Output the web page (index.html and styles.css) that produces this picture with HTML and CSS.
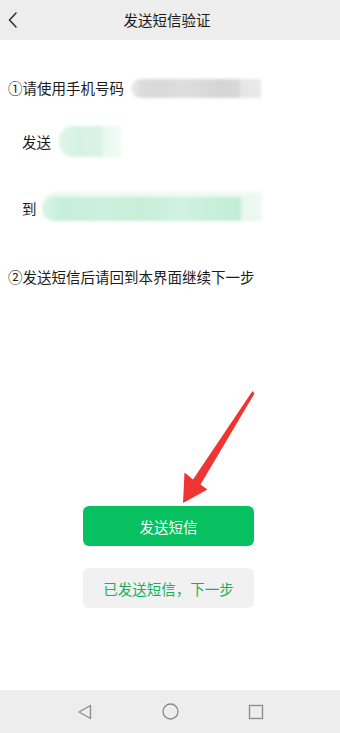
FILE: index.html
```html
<!DOCTYPE html>
<html lang="zh">
<head>
<meta charset="utf-8">
<title>发送短信验证</title>
<link rel="stylesheet" href="styles.css">
</head>
<body>
<div class="app">
  <header class="topbar">
    <svg class="back" width="12" height="18" viewBox="0 0 12 18"><path d="M9 2 L2.5 9 L9 16" fill="none" stroke="#333" stroke-width="1.6" stroke-linecap="round" stroke-linejoin="round"/></svg>
    <div class="title">发送短信验证</div>
    <div></div>
  </header>
  <main class="content">
    <div class="row row1">
      <span class="text">①请使用手机号码</span>
      <div class="blur blur-gray"></div>
    </div>
    <div class="row row2">
      <span class="label">发送</span>
      <div class="blur blur-green-s"></div>
    </div>
    <div class="row row3">
      <span class="label">到</span>
      <div class="blur blur-green-l"></div>
    </div>
    <div class="row row4">
      <span class="text">②发送短信后请回到本界面继续下一步</span>
    </div>
    <button class="btn btn-primary">发送短信</button>
    <button class="btn btn-secondary">已发送短信，下一步</button>
    <svg class="arrow" width="340" height="733" viewBox="0 0 340 733"><polygon points="252.5,391 254.5,393.5 200.5,484.5 207.5,489.5 183,503 184.5,472.5 193,479.5" fill="#ef3434"/></svg>
  </main>
  <nav class="navbar">
    <svg width="16" height="16" viewBox="0 0 16 16"><path d="M13.5 1.5 L2 8 L13.5 14.5 Z" fill="none" stroke="#8a8a8a" stroke-width="1.3" stroke-linejoin="round"/></svg>
    <svg width="17" height="17" viewBox="0 0 17 17"><circle cx="8.5" cy="8.5" r="7.5" fill="none" stroke="#8a8a8a" stroke-width="1.3"/></svg>
    <svg width="16" height="16" viewBox="0 0 16 16"><rect x="1.5" y="1.5" width="13" height="13" fill="none" stroke="#8a8a8a" stroke-width="1.3"/></svg>
  </nav>
</div>
</body>
</html>
```

FILE: styles.css
```css
* { box-sizing: border-box; }
html, body { margin: 0; padding: 0; background: #fff; }
body { font-family: "Noto Sans CJK SC", "Noto Sans", sans-serif; color: #1f1f1f; }
.app { width: 340px; height: 733px; display: flex; flex-direction: column; overflow: hidden; }
.topbar { height: 40px; background: #ededed; display: grid; grid-template-columns: 34px 1fr 40px; align-items: center; flex: none; }
.back { margin-left: 7px; }
.title { text-align: center; font-size: 14.5px; color: #1a1a1a; line-height: 20px; }
.content { flex: 1; position: relative; display: flex; flex-direction: column; padding-left: 8px; }
.row { display: flex; align-items: center; font-size: 14.5px; line-height: 20px; color: #1c1c1c; }
.row1 { margin-top: 38px; height: 20px; }
.row2 { margin-top: 28px; height: 31px; padding-left: 14px; }
.row3 { margin-top: 40px; height: 24px; padding-left: 14px; }
.row4 { margin-top: 46px; height: 20px; }
.blur { filter: blur(1.5px); }
.blur-gray { margin-left: 7px; width: 130px; height: 19px; border-radius: 10px 0 0 10px;
  background: linear-gradient(90deg, #ebebeb 0, #dcdcdc 10px, #d8d8d8 30px, #dedede 50px, #dadada 70px, #d5d5d5 90px, #d8d8d8 108px, #e6e6e6 110px, #e9e9e9 130px); }
.blur-green-s { margin-left: 8px; width: 62px; height: 31px; border-radius: 14px 0 0 14px;
  background: linear-gradient(90deg, #dff5ea 0, #d6f2e4 20px, #d9f3e6 42px, #e9f8f0 44px, #f0faf5 62px); }
.blur-green-l { margin-left: 5px; width: 220px; height: 24px; border-radius: 12px 0 0 12px;
  box-shadow: 0 -5px 0 #eef9f3;
  background: linear-gradient(90deg, #dbf4e8 0, #c6eeda 20px, #cbf0dd 60px, #c7eed9 100px, #d1f1e1 140px, #c4eed8 180px, #c2edd6 198px, #e6f7ee 200px, #eef9f4 220px); }
.btn { font-family: inherit; font-size: 14.5px; border: none; width: 171px; height: 40px; border-radius: 6px; margin-left: 75px; padding: 0; flex: none; }
.btn-primary { margin-top: 219px; background: #07c160; color: #fff; }
.btn-secondary { margin-top: 22px; background: #f1f1f1; color: #14b15e; }
.arrow { position: absolute; left: 0; top: -40px; pointer-events: none; }
.navbar { height: 43px; flex: none; background: #ededed; display: flex; align-items: center; justify-content: center; gap: 69px; }
```
